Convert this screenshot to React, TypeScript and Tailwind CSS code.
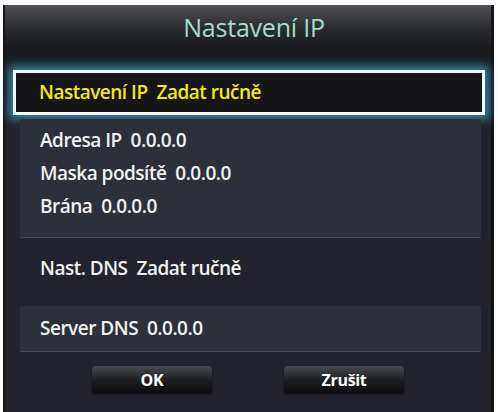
import React from 'react';

const font = { fontFamily: '"Open Sans", "Noto Sans", sans-serif' };

type Row = { label: string; value: string };

const addressRows: Row[] = [
  { label: 'Adresa IP', value: '0.0.0.0' },
  { label: 'Maska podsítě', value: '0.0.0.0' },
  { label: 'Brána', value: '0.0.0.0' },
];

const RowText = ({ label, value, className = '' }: Row & { className?: string }) => (
  <span className={`whitespace-pre text-[19px] font-semibold tracking-[-0.5px] ${className}`}>
    {label}  {value}
  </span>
);

const DialogButton = ({ children }: { children: React.ReactNode }) => (
  <button className="w-[120px] h-[27px] rounded-[3px] bg-gradient-to-b from-[#4a4b50] via-[#1f2024] to-[#0e0e10] shadow-[0_1px_2px_rgba(0,0,0,0.6)] text-[16px] font-bold tracking-[-0.3px] text-white">
    {children}
  </button>
);

export default function App() {
  return (
    <div className="w-[498px] h-[412px] bg-white pt-[5px] pl-[3px] pr-[4px] flex" style={font}>
      <div className="flex-1 flex flex-col bg-[#22232c] border-l-[2px] border-r-[3px] border-[#131418]">
        {/* title */}
        <div className="h-[44px] flex items-center justify-center pl-[12px] bg-gradient-to-b from-[#505256] via-[#2c2d31] to-[#1a1b1e]">
          <span className="text-[25px] text-[#a6dcc8] tracking-[-0.2px] pt-[2px]">Nastavení IP</span>
        </div>

        {/* focused row */}
        <div className="bg-gradient-to-b from-[#1a1b1f] to-[#22232c] pt-[21px]">
          <div className="ml-[8px] mr-[6px] h-[45px] flex items-center pl-[23px] bg-[#161618] border-[3px] border-[#eefcff] shadow-[0_0_9px_4px_rgba(70,190,225,0.65)]">
            <RowText label="Nastavení IP" value="Zadat ručně" className="text-[#f4ea12]" />
          </div>
        </div>

        {/* address panel */}
        <div className="mt-[4px] ml-[15px] mr-[10px] pt-[5px] pb-[14px] pl-[20px] bg-[#2d2f3a] border-b border-[#4a4d59] rounded-[2px]">
          {addressRows.map((row) => (
            <div key={row.label} className="h-[33px] flex items-center">
              <RowText {...row} className="text-[#f2f2f2]" />
            </div>
          ))}
        </div>

        <div className="mt-[14px] h-[33px] flex items-center pl-[35px]">
          <RowText label="Nast. DNS" value="Zadat ručně" className="text-[#f2f2f2]" />
        </div>

        {/* dns panel */}
        <div className="mt-[21px] ml-[15px] mr-[10px] h-[46px] flex items-center pl-[20px] bg-[#2d2f3a] border-b border-[#4a4d59] rounded-[2px]">
          <RowText label="Server DNS" value="0.0.0.0" className="text-[#f2f2f2]" />
        </div>

        <div className="mt-[14px] flex justify-center gap-[72px]">
          <DialogButton>OK</DialogButton>
          <DialogButton>Zrušit</DialogButton>
        </div>
      </div>
    </div>
  );
}
